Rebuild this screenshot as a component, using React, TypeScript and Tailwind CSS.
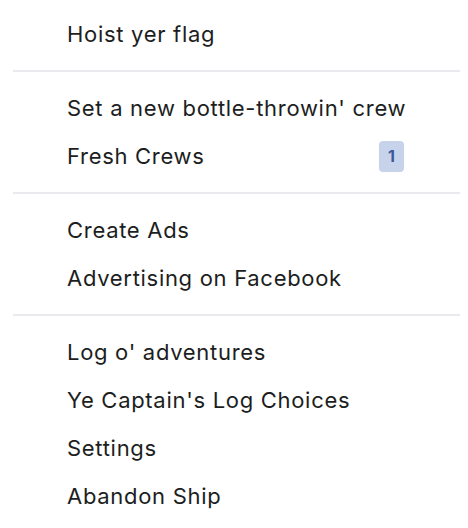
const groups: { label: string; badge?: number }[][] = [
  [{ label: "Hoist yer flag" }],
  [{ label: "Set a new bottle-throwin' crew" }, { label: "Fresh Crews", badge: 1 }],
  [{ label: "Create Ads" }, { label: "Advertising on Facebook" }],
  [
    { label: "Log o' adventures" },
    { label: "Ye Captain's Log Choices" },
    { label: "Settings" },
    { label: "Abandon Ship" },
  ],
];

export default function App() {
  return (
    <main className="w-[468px] h-[528px] bg-white pt-[10px] font-['Inter',sans-serif] text-[#1c1e21] overflow-hidden">
      {groups.map((items, gi) => (
        <div key={gi}>
          {gi > 0 && <div className="ml-[13px] mr-[8px] h-[2px] bg-[#e9e9ee]" />}
          <ul className={`flex flex-col ${gi > 0 ? "pt-[12px]" : ""} pb-[12px]`}>
            {items.map(item => (
              <li key={item.label} className="flex h-[48px] items-center justify-between pl-[67px] pr-[64px] text-[22px] tracking-[0.7px]">
                <span className="whitespace-nowrap">{item.label}</span>
                {item.badge !== undefined && (
                  <span className="flex h-[31px] w-[25px] items-center justify-center rounded-[4px] bg-[#c6d3ea] text-[16px] font-bold tracking-normal text-[#3b5998]">
                    {item.badge}
                  </span>
                )}
              </li>
            ))}
          </ul>
        </div>
      ))}
    </main>
  );
}
